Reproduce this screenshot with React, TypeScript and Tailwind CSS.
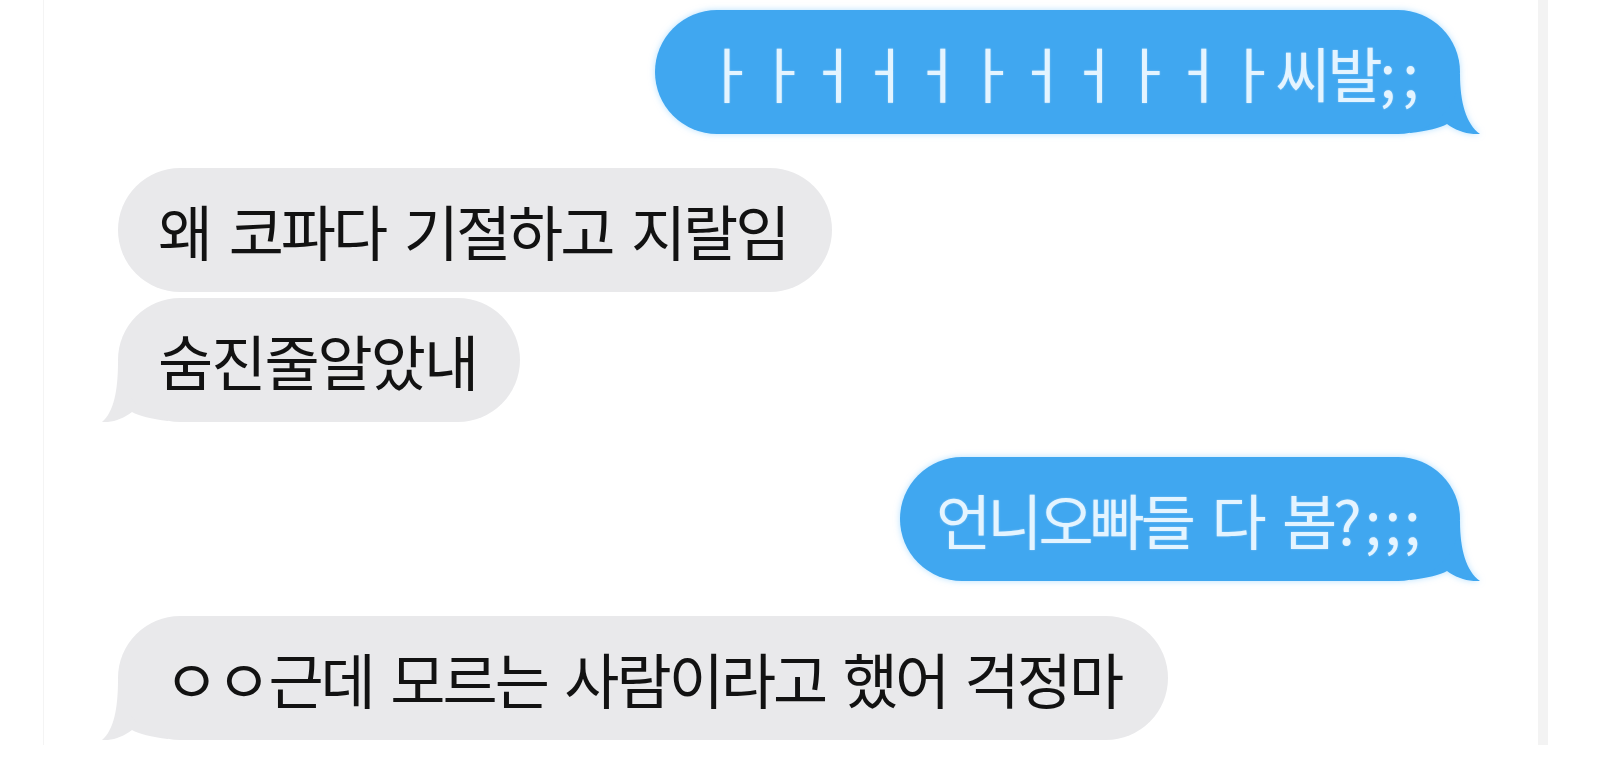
import React from "react";

const BLUE = "#40a7f0";
const GRAY = "#e9e9eb";

const TAIL_PATH_R =
  "M0 0 L50 0 C50 28 56 50 70 60 C60 61 46 57 37 50 C30 54 18 57 0 59 Z";
const TAIL_PATH_L =
  "M0 0 L50 0 C50 28 54 50 66 60 C57 61 45 57 36 50 C29 54 17 57 0 59 Z";

function TailRight({ color }: { color: string }) {
  return (
    <svg
      className="absolute bottom-0 right-[-20px] w-[70px] h-[60px]"
      viewBox="0 0 70 60"
    >
      <path d={TAIL_PATH_R} fill={color} />
    </svg>
  );
}

function TailLeft({ color }: { color: string }) {
  return (
    <svg
      className="absolute bottom-0 left-[-16px] w-[66px] h-[60px] -scale-x-100"
      viewBox="0 0 66 60"
    >
      <path d={TAIL_PATH_L} fill={color} />
    </svg>
  );
}

export default function App() {
  const font = "font-['Noto_Sans_CJK_KR','Noto_Sans_CJK_SC',sans-serif]";
  return (
    <div className={`w-[1600px] h-[780px] bg-white overflow-hidden ${font}`}>
      <div className="ml-[43px] w-[1505px] h-[745px] border-l border-[#f4f4f4] flex">
        <div className="flex-1 flex flex-col pl-[74px] pr-[78px]">
          {/* Blue 1 */}
          <div className="mt-[10px] flex justify-end">
            <div className="relative drop-shadow-[0_0_3px_rgba(110,195,255,0.5)]">
              <div
                className="relative z-10 h-[124px] w-[805px] rounded-full flex items-center pl-[46px] whitespace-nowrap text-[60px] tracking-[-3px] text-[#e4f4ff] [text-shadow:0_0_2px_rgba(255,255,255,0.4)]"
                style={{ backgroundColor: BLUE }}
              >
                ㅏㅏㅓㅓㅓㅏㅓㅓㅏㅓㅏ씨발<span className="tracking-[6px]">;;</span>
              </div>
              <TailRight color={BLUE} />
            </div>
          </div>

          {/* Gray 1 */}
          <div className="mt-[34px] flex justify-start">
            <div className="relative">
              <div
                className="relative z-10 h-[124px] w-[714px] rounded-full flex items-center pl-[40px] whitespace-nowrap text-[60px] tracking-[-3px] [word-spacing:8px] text-[#121212]"
                style={{ backgroundColor: GRAY }}
              >
                왜 코파다 기절하고 지랄임
              </div>
            </div>
          </div>

          {/* Gray 2 */}
          <div className="mt-[6px] flex justify-start">
            <div className="relative">
              <div
                className="relative z-10 h-[124px] w-[402px] rounded-full flex items-center pl-[40px] whitespace-nowrap text-[60px] tracking-[-2px] text-[#121212]"
                style={{ backgroundColor: GRAY }}
              >
                숨진줄알았내
              </div>
              <TailLeft color={GRAY} />
            </div>
          </div>

          {/* Blue 2 */}
          <div className="mt-[35px] flex justify-end">
            <div className="relative drop-shadow-[0_0_3px_rgba(110,195,255,0.5)]">
              <div
                className="relative z-10 h-[124px] w-[560px] rounded-full flex items-center pl-[36px] whitespace-nowrap text-[60px] tracking-[-4px] [word-spacing:10px] text-[#e4f4ff] [text-shadow:0_0_2px_rgba(255,255,255,0.4)]"
                style={{ backgroundColor: BLUE }}
              >
                언니오빠들 다 봄<span className="tracking-[3px]">?;;;</span>
              </div>
              <TailRight color={BLUE} />
            </div>
          </div>

          {/* Gray 3 */}
          <div className="mt-[35px] flex justify-start">
            <div className="relative">
              <div
                className="relative z-10 h-[124px] w-[1050px] rounded-full flex items-center pl-[46px] whitespace-nowrap text-[60px] tracking-[-3px] [word-spacing:7px] text-[#121212]"
                style={{ backgroundColor: GRAY }}
              >
                ㅇㅇ근데 모르는 사람이라고 했어 걱정마
              </div>
              <TailLeft color={GRAY} />
            </div>
          </div>
        </div>
        <div className="w-[10px] bg-[#f3f3f3]" />
      </div>
    </div>
  );
}
